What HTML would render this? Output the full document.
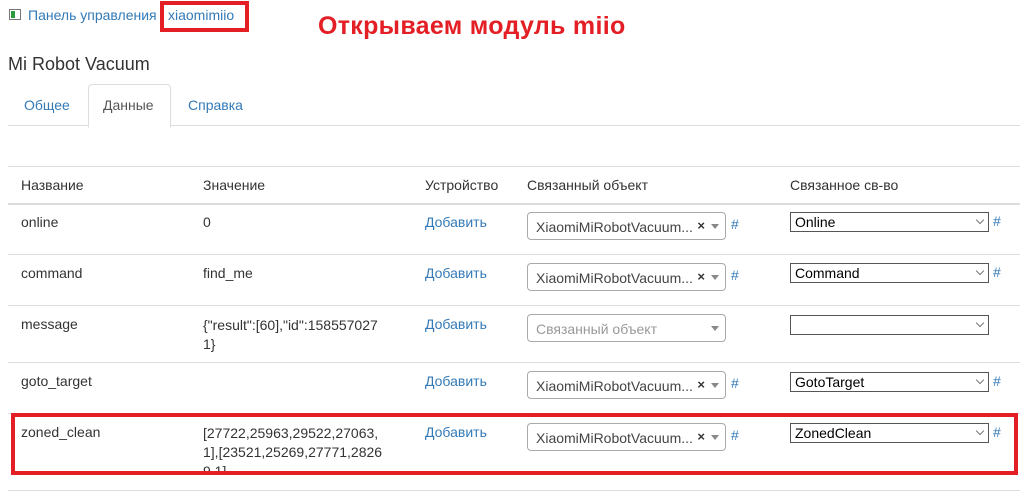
<!DOCTYPE html>
<html><head><meta charset="utf-8"><style>
body{margin:0;width:1020px;height:495px;background:#fff;font-family:"Liberation Sans",Arial,sans-serif;font-size:14px;color:#333;position:relative;overflow:hidden}
.a{position:absolute;white-space:nowrap}
.l{color:#337ab7}
.hr{position:absolute;left:8px;right:0;height:1px;background:#ddd}
.s2{position:absolute;left:527px;width:199px;height:28px;border:1px solid #aaa;border-radius:4px;box-sizing:border-box}
.s2 span{position:absolute;left:8px;top:6px;font-size:14px;color:#444}
.s2 i{position:absolute;right:6px;top:11px;border:4px solid transparent;border-top:5px solid #888;border-bottom:0}
.s2 b{position:absolute;right:20px;top:5px;font-size:13px;color:#333}
.sel{position:absolute;left:790px;width:199px;height:20px;border:1px solid #555;box-sizing:border-box}
.sel span{position:absolute;left:4px;top:1px;color:#000}
.sel i{position:absolute;right:5px;top:4px;width:5px;height:5px;border-right:1px solid #777;border-bottom:1px solid #777;transform:rotate(45deg)}
.h{position:absolute;color:#337ab7}
.red{position:absolute;border:4px solid #e31e24;box-sizing:border-box}
</style></head><body>
<div class="a" style="left:9px;top:9px;width:12px;height:11px;border:1px solid #777;box-sizing:border-box;background:#fff"><div style="position:absolute;left:1px;top:1px;width:4px;height:7px;background:#2a9b3c"></div></div>
<div class="a l" style="left:28px;top:7px">Панель управления</div>
<div class="a l" style="left:168px;top:7px">xiaomimiio</div>
<div class="red" style="left:160px;top:1px;width:89px;height:31px"></div>
<div class="a" style="left:318px;top:12px;font-size:25px;font-weight:bold;color:#e31e24;letter-spacing:0.3px">Открываем модуль miio</div>
<div class="a" style="left:8px;top:54px;font-size:18px;color:#333">Mi Robot Vacuum</div>
<div class="hr" style="top:125px;right:0"></div>
<div class="a" style="left:88px;top:84px;width:81px;height:42px;border:1px solid #ddd;border-bottom:1px solid #fff;border-radius:4px 4px 0 0;background:#fff"></div>
<div class="a l" style="left:24px;top:97px">Общее</div>
<div class="a" style="left:103px;top:97px;color:#555">Данные</div>
<div class="a l" style="left:188px;top:97px">Справка</div>
<div class="hr" style="top:166px"></div>
<div class="a" style="left:21px;top:177px">Название</div>
<div class="a" style="left:203px;top:177px">Значение</div>
<div class="a" style="left:425px;top:177px">Устройство</div>
<div class="a" style="left:527px;top:177px">Связанный объект</div>
<div class="a" style="left:790px;top:177px">Связанное св-во</div>
<div class="hr" style="top:203px;height:2px"></div>

<div class="a" style="left:21px;top:214px">online</div>
<div class="a" style="left:203px;top:214px">0</div>
<div class="a l" style="left:425px;top:214px">Добавить</div>
<div class="s2" style="top:212px"><span>XiaomiMiRobotVacuum...</span><b>×</b><i></i></div>
<div class="h" style="left:731px;top:216px">#</div>
<div class="sel" style="top:212px"><span>Online</span><i></i></div>
<div class="h" style="left:993px;top:213px">#</div>
<div class="hr" style="top:254px"></div>

<div class="a" style="left:21px;top:265px">command</div>
<div class="a" style="left:203px;top:265px">find_me</div>
<div class="a l" style="left:425px;top:265px">Добавить</div>
<div class="s2" style="top:263px"><span>XiaomiMiRobotVacuum...</span><b>×</b><i></i></div>
<div class="h" style="left:731px;top:267px">#</div>
<div class="sel" style="top:263px"><span>Command</span><i></i></div>
<div class="h" style="left:993px;top:264px">#</div>
<div class="hr" style="top:305px"></div>

<div class="a" style="left:21px;top:316px">message</div>
<div class="a" style="left:203px;top:316px;line-height:19px">{"result":[60],"id":158557027<br>1}</div>
<div class="a l" style="left:425px;top:316px">Добавить</div>
<div class="s2" style="top:314px"><span style="color:#999">Связанный объект</span><i></i></div>
<div class="sel" style="top:315px"><i></i></div>
<div class="hr" style="top:362px"></div>

<div class="a" style="left:21px;top:373px">goto_target</div>
<div class="a l" style="left:425px;top:373px">Добавить</div>
<div class="s2" style="top:371px"><span>XiaomiMiRobotVacuum...</span><b>×</b><i></i></div>
<div class="h" style="left:731px;top:375px">#</div>
<div class="sel" style="top:372px"><span>GotoTarget</span><i></i></div>
<div class="h" style="left:993px;top:373px">#</div>
<div class="hr" style="top:413px"></div>

<div class="a" style="left:21px;top:424px">zoned_clean</div>
<div class="a" style="left:203px;top:424px;line-height:19px">[27722,25963,29522,27063,<br>1],[23521,25269,27771,2826<br>9,1]</div>
<div class="a l" style="left:425px;top:424px">Добавить</div>
<div class="s2" style="top:423px"><span>XiaomiMiRobotVacuum...</span><b>×</b><i></i></div>
<div class="h" style="left:731px;top:427px">#</div>
<div class="sel" style="top:423px"><span>ZonedClean</span><i></i></div>
<div class="h" style="left:993px;top:424px">#</div>
<div class="a" style="left:0;top:474px;width:1020px;height:16px;background:#fff"></div>
<div class="red" style="left:11px;top:413px;width:1007px;height:62px"></div>
<div class="hr" style="top:490px"></div>
</body></html>
